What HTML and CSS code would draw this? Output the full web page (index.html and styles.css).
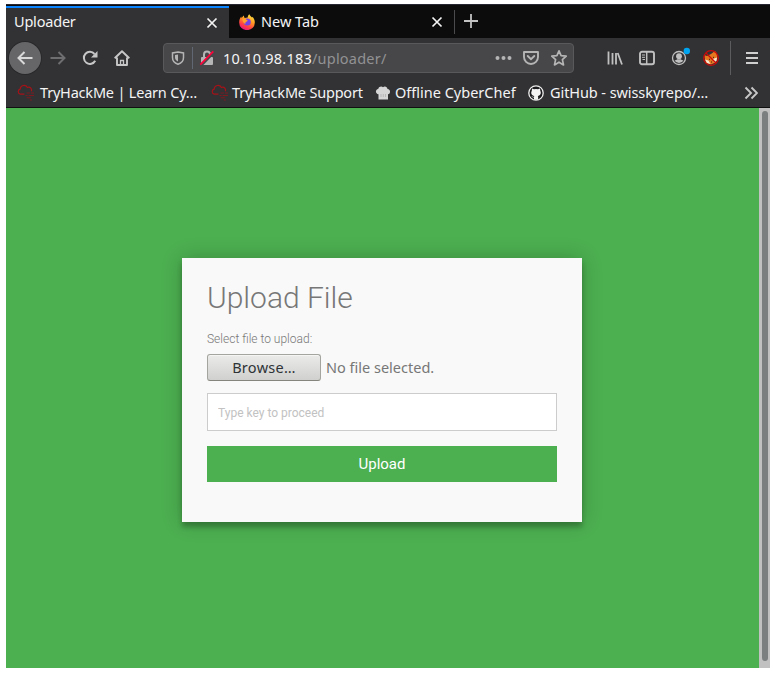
FILE: index.html
```html
<!DOCTYPE html>
<html lang="en">
<head>
<meta charset="utf-8">
<title>Uploader</title>
<link rel="stylesheet" href="styles.css">
</head>
<body>
<svg width="0" height="0" class="defs">
  <symbol id="cloud" viewBox="0 0 16 16">
    <path d="M7 9.500H3.200A2.400 2.400 0 0 1 3 4.800 3.600 3.600 0 0 1 9.800 3.300 2.700 2.700 0 0 1 13.500 6.800" fill="none" stroke="#a51218" stroke-width="1.100"/>
    <path d="M9 8.500h3M13 8.500h3M8 10.800h2M11 10.800h5M9 13h4M12 15h2" stroke="#7d1a20" stroke-width="1"/>
  </symbol>
  <symbol id="close" viewBox="0 0 12 12"><path d="M1.500 1.500l9 9M10.500 1.500l-9 9" stroke="#f4f4f4" stroke-width="1.700"/></symbol>
</svg>
<div class="window">
  <div class="tabs">
    <div class="tab active"><span class="t-uploader">Uploader</span><svg class="close" width="12" height="12"><use href="#close"/></svg></div>
    <div class="tab">
      <svg class="firefox" width="16" height="16" viewBox="0 0 16 16">
        <defs><linearGradient id="ff" x1=".8" y1="0" x2=".3" y2="1"><stop offset="0" stop-color="#fff04a"/><stop offset=".4" stop-color="#ff9a22"/><stop offset=".75" stop-color="#ff3c46"/><stop offset="1" stop-color="#e31587"/></linearGradient></defs>
        <path d="M10.500.2c.2 1.400 1.600 2 2.500 3.300.4-.1.500-.4.500-.8 1.600 1.800 2.400 3.800 2.300 6A7.800 7.400 0 0 1 .2 8.700C.1 6.200 1 4.300 2.200 2.600l.5 1.700C3.300 3.100 3.900 2.300 5 1.600c-.1 1 .2 1.800.8 2.400L8.700 3.600C8.800 2 9.400.9 10.500.2z" fill="url(#ff)"/>
        <circle cx="8.300" cy="8" r="3.500" fill="#7542e5"/>
        <path d="M3.300 5.200c2-.9 3.500-.3 4.500.9l1 .5c-.2.900-1.300 1-2 1.500-.4.400-.5 1-.2 1.700-1.600-.2-2.900-1.800-3.300-4.600z" fill="#ffa12b"/>
      </svg>
      <span class="t-new">New Tab</span><svg class="close" width="12" height="12"><use href="#close"/></svg>
    </div>
    <div class="newtab"><svg width="16" height="16" viewBox="0 0 16 16"><path d="M8 1v14M1 8h14" stroke="#c3c3c4" stroke-width="1.800"/></svg></div>
  </div>

  <div class="toolbar">
    <div class="nav">
      <div class="back"><svg width="16" height="16" viewBox="0 0 16 16"><path d="M15.500 8H1.500M7.500 2l-6 6 6 6" fill="none" stroke="#d9d9da" stroke-width="2"/></svg></div>
      <div class="cell"><svg width="16" height="16" viewBox="0 0 16 16"><path d="M.5 8h14M8.500 2l6 6-6 6" fill="none" stroke="#6e6e70" stroke-width="2"/></svg></div>
      <div class="cell"><svg width="16" height="16" viewBox="0 0 16 16"><path d="M13.200 10.700A6 6 0 1 1 12.500 4" fill="none" stroke="#c7c7c8" stroke-width="2"/><path d="M15.500 1v6.500H9z" fill="#c7c7c8"/></svg></div>
      <div class="cell"><svg width="16" height="16" viewBox="0 0 16 16"><path d="M.7 8.300L8 1.200l7.300 7.100M3 7.500V15h10V7.500" fill="none" stroke="#c7c7c8" stroke-width="1.900" stroke-linejoin="round"/><path d="M6.500 15v-4.500h3V15" fill="none" stroke="#c7c7c8" stroke-width="1.300"/></svg></div>
    </div>
    <div class="url">
      <svg class="shield" width="14" height="14" viewBox="0 0 14 14"><path d="M7 1L12.500 2v4.500C12.500 10 10 12.300 7 13.300 4 12.300 1.500 10 1.500 6.500V2z" fill="none" stroke="#b5b5b6" stroke-width="1.500"/><path d="M7 3.500v7C5 9.400 4 8.200 4 6.500V4z" fill="#b5b5b6"/></svg>
      <span class="rule"></span>
      <svg class="lock" width="16" height="16" viewBox="0 0 16 16"><rect x="2" y="7" width="12" height="8" rx="1" fill="#b5b5b6"/><path d="M5 7V4.500a3 3 0 0 1 6 0V7" fill="none" stroke="#b5b5b6" stroke-width="2"/><path d="M2.500 15.500L15.500 2" stroke="#47474a" stroke-width="2"/><path d="M1.300 14.700L14.300 1.300" stroke="#ff0039" stroke-width="1.700"/></svg>
      <span class="address">10.10.98.183<i>/uploader/</i></span>
      <svg class="dots" width="17" height="6" viewBox="0 0 17 6"><g fill="#b5b5b6"><circle cx="2.500" cy="3" r="2"/><circle cx="8.500" cy="3" r="2"/><circle cx="14.500" cy="3" r="2"/></g></svg>
      <svg class="pocket" width="16" height="16" viewBox="0 0 16 16"><path d="M1 2h14v5a7 7 0 0 1-14 0z" fill="none" stroke="#b5b5b6" stroke-width="1.900" stroke-linejoin="round"/><path d="M4.700 6L8 9.200 11.300 6" fill="none" stroke="#b5b5b6" stroke-width="1.900" stroke-linecap="round"/></svg>
      <svg class="star" width="16" height="16" viewBox="0 0 16 16"><path d="M8 .9l2.100 4.700 5.100.5-3.800 3.500 1.100 5.300L8 12.200l-4.500 2.700 1.100-5.300L.8 6.100l5.100-.5z" fill="none" stroke="#b5b5b6" stroke-width="1.700" stroke-linejoin="round"/></svg>
    </div>
    <div class="tools">
      <div class="cell"><svg width="16" height="16" viewBox="0 0 16 16"><path d="M1.500 1.500v13M5.500 3v11.500M9 3v11.500M10.700 3l4.300 11.500" stroke="#c0c0c1" stroke-width="1.800"/></svg></div>
      <div class="cell"><svg width="16" height="16" viewBox="0 0 16 16"><rect x="1" y="1.800" width="14" height="12.400" rx="2" fill="none" stroke="#c0c0c1" stroke-width="1.900"/><path d="M7.700 2v12" stroke="#c0c0c1" stroke-width="1.500"/><path d="M3 5h3M3 7.300h3M3.500 9.500h2.500" stroke="#c0c0c1"/></svg></div>
      <div class="cell"><svg width="22" height="22" viewBox="0 0 22 22"><circle cx="11" cy="11" r="6.500" fill="none" stroke="#c0c0c1" stroke-width="1.300"/><circle cx="11" cy="9.200" r="2.900" fill="#c0c0c1"/><path d="M6.500 13.200q2 .3 2.500-1h4q.5 1.300 2.500 1-1.400 2.900-4.500 2.900t-4.500-2.900z" fill="#c0c0c1"/><circle cx="18.800" cy="4" r="3.200" fill="#00a5f2"/></svg></div>
      <div class="cell"><svg width="18" height="18" viewBox="0 0 18 18"><path d="M2 6l3 1L9 5l4-3 1.500 2 .8 5-2 4.500L9 15.500 4 14z" fill="#e7771e"/><path d="M3 10.500l3.500 1 2 3.500L5 14zM11 10l4-1.500-.5 3.500-2.500 1.500z" fill="#f7e6d2"/><path d="M7 10l1 .5M11 8.500l1-.3M9 13h1" stroke="#33201a"/><circle cx="9" cy="9" r="7.300" fill="none" stroke="#cc0909" stroke-width="1.300"/><path d="M4 4l10 10" stroke="#cc0909" stroke-width="1.300"/></svg></div>
    </div>
    <span class="divider"></span>
    <svg class="menu" width="12" height="14" viewBox="0 0 12 14"><path d="M0 2h12M0 7h12M0 12h12" stroke="#cfcfd0" stroke-width="2"/></svg>
  </div>

  <div class="bookmarks">
    <div class="bm b1"><svg width="17" height="17"><use href="#cloud"/></svg><span>TryHackMe | Learn Cy…</span></div>
    <div class="bm b2"><svg width="17" height="17"><use href="#cloud"/></svg><span>TryHackMe Support</span></div>
    <div class="bm b3"><svg width="16" height="16" viewBox="0 0 16 16"><path d="M3.500 14.500V9.200C.2 9 .1 4.500 3.200 4 4 1 7 1 8 2.300 9.500.8 12.300 1.500 12.500 4c3.500.3 3.200 5 .5 5.300v5.200z" fill="#d6d6d7"/><path d="M6 9v3M8.300 9v3M10.500 9v3" stroke="#aaaaac" stroke-width=".7"/></svg><span>Offline CyberChef</span></div>
    <div class="bm b4"><svg width="16" height="16" viewBox="0 0 16 16"><circle cx="8" cy="8" r="7.200" fill="#1b1b1e" stroke="#eee" stroke-width="1.300"/><path d="M4 3.500l2 .7q2-.5 4 0l2-.7.3 2.200c1.300 2.500.2 4.700-2.500 5.200.4.600.4 1 .4 3.800H6v-2.200c-1.600.3-2-.6-2.600-1.400 1 0 1.300 1.200 2.600.7l.3-.9C3.500 10.400 2.500 8.200 3.800 5.700z" fill="#f3f3f3"/></svg><span>GitHub - swisskyrepo/…</span></div>
    <svg class="more" width="14" height="14" viewBox="0 0 14 14"><path d="M1.500 1.500L7 7l-5.500 5.500M7.500 1.500L13 7l-5.500 5.500" fill="none" stroke="#c7c7c8" stroke-width="1.900"/></svg>
  </div>

  <div class="viewport">
    <main class="page">
      <form class="card">
        <h1><span>Upload File</span></h1>
        <label>Select file to upload:</label>
        <div class="file"><button type="button"><span>Browse…</span></button><span class="none">No file selected.</span></div>
        <input type="text" placeholder="Type key to proceed">
        <button class="submit" type="button">Upload</button>
      </form>
    </main>
    <div class="scroll"><div class="thumb"></div></div>
  </div>
</div>
</body>
</html>
```
FILE: styles.css
```css
* { box-sizing: border-box; }
body { margin: 0; padding: 4px 7px 8px 6px; background: #fff; font: 14.500px "Noto Sans", sans-serif; overflow: hidden; }
svg { flex: none; display: block; }
.defs { position: absolute; }
.window { height: 664px; display: flex; flex-direction: column; background: #323234; white-space: nowrap; }

.tabs { height: 34px; flex: none; display: flex; background: #0c0c0d; border-top: 1px solid #252632; color: #f4f4f5; }
.tab { display: flex; align-items: center; width: 225px; padding: 1px 11px 0 10px; }
.tab.active { width: 223px; padding: 0 11px 0 8px; background: #323234; border-top: 2px solid #0a84ff; margin-top: 1px; }
.tab span { padding-bottom: 2px; }
.tab .t-uploader { letter-spacing: -.2px; padding-bottom: 4px; }
.tab .close { margin-left: auto; }
.tab.active .close { margin-bottom: 1px; }
.firefox { margin-right: 6px; }
.newtab { height: 24px; margin-top: 5px; padding: 3px 0 0 8px; border-left: 1px solid #4b4b4d; }

.toolbar { height: 40px; flex: none; display: flex; align-items: center; padding-left: 3px; }
.nav, .tools { display: flex; align-items: center; }
.nav { width: 154px; }
.cell { width: 32px; display: grid; place-items: center; }
.back { width: 32px; height: 32px; border-radius: 50%; display: grid; place-items: center; background: #666668; box-shadow: 0 0 0 1px #29292b; margin-right: 1px; }
.url { width: 411px; height: 30px; display: flex; align-items: center; background: #474749; border: 1px solid #59595c; border-radius: 4px; padding-left: 7px; }
.rule { width: 1px; height: 22px; background: #626873; margin: 0 6px 0 7px; }
.address { width: 272px; margin-left: 8px; letter-spacing: .22px; color: #f5f5f6; }
.address i { color: #929294; font-style: normal; }
.pocket { margin: 0 12px 0 11px; }
.tools { margin-left: 25px; }
.divider { width: 1px; height: 34px; margin-left: 3px; background: #5c5c5e; }
.menu { margin-left: 15px; }

.bookmarks { height: 30px; flex: none; display: flex; align-items: center; border-bottom: 1px solid #101011; color: #f4f4f5; }
.bm { display: flex; align-items: center; }
.bm span { padding-bottom: 2px; }
.b1 { width: 195px; padding-left: 11px; }
.b1 span { margin-left: 6px; letter-spacing: -.2px; }
.b2 { width: 174px; padding-left: 10px; }
.b2 span { margin-left: 4px; letter-spacing: -.2px; }
.b3 { width: 153px; }
.b3 span { margin-left: 4px; }
.b4 span { margin-left: 6px; letter-spacing: -.08px; }
.more { margin: 0 12px 0 auto; }

.viewport { height: 560px; flex: none; display: flex; }
.page { flex: 1; background: #4caf50; padding: 150px 0 0 176px; }
.scroll { width: 11px; background: #c1c1c1; padding: 3px 2px 7px 3px; }
.thumb { width: 6px; height: 100%; border-radius: 3px; background: #7c7f80; }
.card { width: 400px; height: 264px; padding: 25px; display: flex; flex-direction: column; background: #f9f9f9; box-shadow: 0 0 20px rgba(0,0,0,.2), 0 5px 5px rgba(0,0,0,.24); color: #777; font-family: Roboto, sans-serif; }
h1 { margin: -3px 0 0; font-size: 30px; line-height: 36px; font-weight: 300; }
label { font-size: 12px; line-height: 16px; font-weight: 300; margin: 15px 0 7px; }
.file { height: 27px; display: flex; align-items: center; font: 14.500px "Noto Sans", sans-serif; }
.file span { padding-bottom: 2px; }
.file button { width: 114px; height: 27px; padding: 0; display: grid; place-items: center; border: 1px solid #a5a59f; border-bottom-color: #85857d; border-radius: 3px; background: linear-gradient(#ebebea, #d0d0ce); color: #2e3436; font: inherit; letter-spacing: .3px; box-shadow: inset 0 1px #f5f5f4; }
.none { margin-left: 5px; }
input { width: 350px; height: 38px; margin: 12px 0 15px; padding: 2px 10px 0; border: 1px solid #ccc; background: #fff; font: 12px Roboto, sans-serif; }
input::placeholder { color: #c2c2c2; }
.submit { height: 36px; border: 0; background: #4caf50; color: #fff; font: 15px Roboto, sans-serif; }
```
